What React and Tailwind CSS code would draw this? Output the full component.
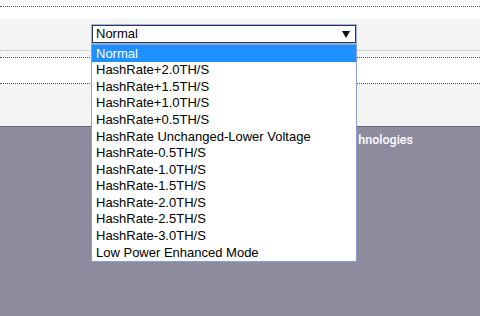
import React from "react";

const options = [
  "Normal",
  "HashRate+2.0TH/S",
  "HashRate+1.5TH/S",
  "HashRate+1.0TH/S",
  "HashRate+0.5TH/S",
  "HashRate Unchanged-Lower Voltage",
  "HashRate-0.5TH/S",
  "HashRate-1.0TH/S",
  "HashRate-1.5TH/S",
  "HashRate-2.0TH/S",
  "HashRate-2.5TH/S",
  "HashRate-3.0TH/S",
  "Low Power Enhanced Mode",
];

export default function App() {
  return (
    <div className="relative w-[480px] h-[316px] overflow-hidden bg-[#8f8b9f] font-['Liberation_Sans',Arial,sans-serif]">
      <div className="h-[19px] bg-white pt-[6px]">
        <div className="border-t border-dotted border-[#555]" />
      </div>
      <div className="h-[108px] bg-[#f4f4f4] border-b border-[#6b6779]">
        <div className="h-[31px] pl-[91px] pt-[5px]">
          <div className="flex h-[20px] w-[266px] items-center justify-between border border-[#9db7e2] bg-white pl-[4px] pr-[6px] text-[13px] text-black shadow-[inset_0_0_0_1px_#2a3550]">
            <span>Normal</span>
            <svg width="8" height="7" viewBox="0 0 8 7">
              <path d="M0 0H8L4 7Z" fill="#111" />
            </svg>
          </div>
        </div>
        <div className="border-t border-dotted border-[#b5b5b5]" />
        <div className="h-[6px]" />
        <div className="h-[27px] bg-white border-y border-dotted border-[#555]" />
      </div>
      <div className="flex justify-end pr-[67px] pt-[5px]">
        <span className="whitespace-nowrap text-[12.5px] leading-[16px] font-medium text-white font-['Roboto',sans-serif]">
          hnologies
        </span>
      </div>

      <div className="absolute left-[91px] top-[44px] w-[266px] border border-[#86a3cf] bg-white">
        {options.map((o, i) => (
          <div
            key={o}
            className={
              "flex h-[16.6px] items-center pl-[4px] text-[13px] whitespace-nowrap " +
              (i === 0 ? "bg-[#1e90ff] text-white" : "text-black")
            }
          >
            {o}
          </div>
        ))}
      </div>
    </div>
  );
}
